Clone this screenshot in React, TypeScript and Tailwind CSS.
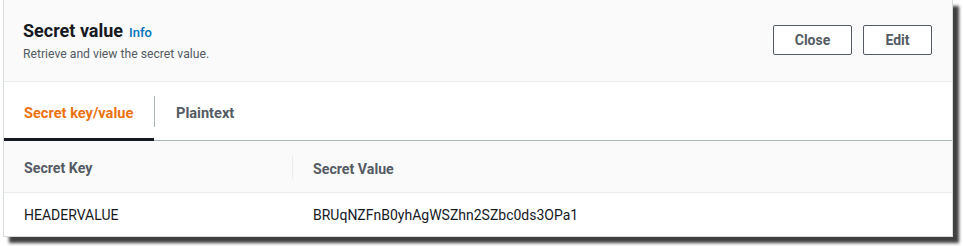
import React from "react";

export default function App() {
  const font = { fontFamily: 'Roboto, "Noto Sans", Arial, sans-serif' };
  return (
    <div className="w-[963px] h-[246px] bg-white" style={font}>
      <div className="ml-[3px] w-[950px] h-[237px] flex flex-col border-l border-r border-b border-[#d5dbdb] bg-white shadow-[6px_6px_3px_rgba(30,30,30,0.85)]">
        <div className="h-[82px] bg-[#fafafa] border-b border-[#eaeded] flex items-start justify-between pl-[19px] pr-[20px]">
          <div className="pt-[18px]">
            <div className="flex items-baseline gap-[6px]">
              <span className="text-[18px] font-bold text-[#16191f] leading-[26px]">Secret value</span>
              <span className="text-[13px] text-[#0073bb] font-medium">Info</span>
            </div>
            <div className="text-[12.2px] text-[#545b64] leading-[18px] mt-[1px]">Retrieve and view the secret value.</div>
          </div>
          <div className="flex gap-[11px] pt-[25px]">
            <button className="w-[79px] h-[30px] border border-[#545b64] rounded-[2px] bg-white text-[14px] font-bold text-[#545b64]">Close</button>
            <button className="w-[69px] h-[30px] border border-[#545b64] rounded-[2px] bg-white text-[14px] font-bold text-[#545b64]">Edit</button>
          </div>
        </div>
        <div className="h-[59px] bg-white border-b border-[#aab7b8] flex items-stretch">
          <div className="relative flex items-center w-[150px] pl-[20px] border-b-[3px] border-[#16191f] mb-[-1px]">
            <span className="text-[14.6px] font-bold text-[#ec7211] pt-[8px]">Secret key/value</span>
          </div>
          <div className="flex items-center">
            <div className="w-px h-[31px] bg-[#aab7b8]" />
          </div>
          <div className="flex items-center pl-[21px] pt-[5px]">
            <span className="text-[14.6px] font-bold text-[#545b64]">Plaintext</span>
          </div>
        </div>
        <div className="h-[52px] bg-[#fafafa] border-b border-[#eaeded] flex items-center">
          <div className="w-[289px] pl-[20px] flex items-center justify-between h-full">
            <span className="text-[14.2px] font-bold text-[#545b64] pt-[5px]">Secret Key</span>
            <div className="w-px h-[24px] bg-[#eaeded]" />
          </div>
          <div className="pl-[20px] pt-[5px]">
            <span className="text-[14.2px] font-bold text-[#545b64]">Secret Value</span>
          </div>
        </div>
        <div className="flex-1 flex items-center pt-[1px]">
          <div className="w-[289px] pl-[20px] text-[14px] text-[#16191f]">HEADERVALUE</div>
          <div className="pl-[20px] text-[14px] text-[#16191f]">BRUqNZFnB0yhAgWSZhn2SZbc0ds3OPa1</div>
        </div>
      </div>
    </div>
  );
}
